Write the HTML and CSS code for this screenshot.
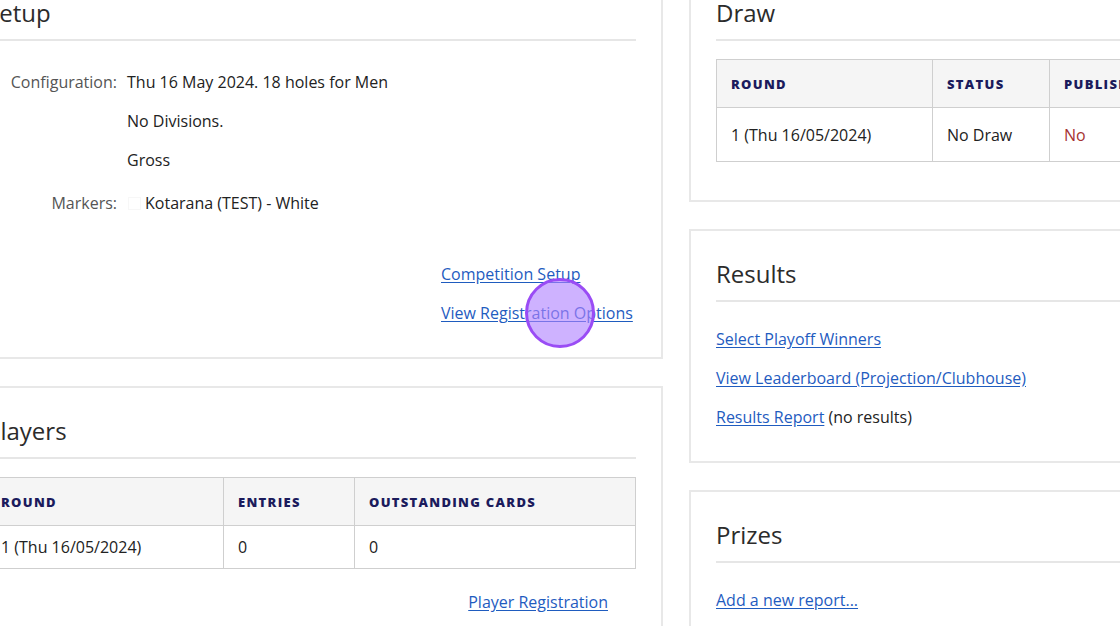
FILE: index.html
```html
<!DOCTYPE html>
<html lang="en">
<head>
    <meta charset="UTF-8">
    <meta name="viewport" content="width=device-width, initial-scale=1.0">
    <title>Competition Overview</title>
    <link rel="stylesheet" href="styles.css">
</head>
<body>
    <div class="page">
        <div class="column">
            <!-- Setup -->
            <section class="card">
                <h2 class="card-title">Setup</h2>
                <div class="details">
                    <div class="label">Configuration:</div>
                    <div class="value">Thu 16 May 2024. 18 holes for Men</div>
                    <div class="label"></div>
                    <div class="value">No Divisions.</div>
                    <div class="label"></div>
                    <div class="value">Gross</div>
                    <div class="label markers">Markers:</div>
                    <div class="value markers"><span class="swatch"></span>Kotarana (TEST) - White</div>
                </div>
                <div class="link-list">
                    <a href="#">Competition Setup</a>
                    <a href="#">View Registration Options</a>
                </div>
            </section>

            <!-- Players -->
            <section class="card">
                <h2 class="card-title">Players</h2>
                <table class="grid players">
                    <thead>
                        <tr>
                            <th class="col-round">Round</th>
                            <th class="col-entries">Entries</th>
                            <th>Outstanding Cards</th>
                        </tr>
                    </thead>
                    <tbody>
                        <tr>
                            <td>1 (Thu 16/05/2024)</td>
                            <td>0</td>
                            <td>0</td>
                        </tr>
                    </tbody>
                </table>
                <div class="card-footer">
                    <a href="#">Player Registration</a>
                </div>
            </section>
        </div>

        <div class="column">
            <!-- Draw -->
            <section class="card">
                <h2 class="card-title">Draw</h2>
                <table class="grid draw">
                    <thead>
                        <tr>
                            <th class="col-round">Round</th>
                            <th class="col-status">Status</th>
                            <th>Published</th>
                        </tr>
                    </thead>
                    <tbody>
                        <tr>
                            <td>1 (Thu 16/05/2024)</td>
                            <td>No Draw</td>
                            <td class="no">No</td>
                        </tr>
                    </tbody>
                </table>
            </section>

            <!-- Results -->
            <section class="card">
                <h2 class="card-title">Results</h2>
                <p><a href="#">Select Playoff Winners</a></p>
                <p><a href="#">View Leaderboard (Projection/Clubhouse)</a></p>
                <p><a href="#">Results Report</a> (no results)</p>
            </section>

            <!-- Prizes -->
            <section class="card">
                <h2 class="card-title">Prizes</h2>
                <p><a href="#">Add a new report...</a></p>
            </section>
        </div>
    </div>

    <div class="click-marker"></div>
</body>
</html>
```

FILE: styles.css
```css
html, body {
    margin: 0;
    height: 100%;
    overflow: hidden;
}

body {
    background-color: #fff;
    font-family: "Open Sans", "Noto Sans", sans-serif;
    font-size: 16px;
    line-height: 24px;
    color: #222;
    position: relative;
}

a {
    color: #1f5cbf;
    text-decoration: underline;
    text-underline-offset: 2px;
}

.page {
    display: grid;
    grid-template-columns: 704px 704px;
    column-gap: 26px;
    margin-left: -41px;
    margin-top: -32px;
    width: 1434px;
}

.column {
    display: flex;
    flex-direction: column;
    gap: 27px;
}

.card {
    border: 2px solid #e8e8e8;
    padding: 28px 25px 32px;
    background: #fff;
}

.card-title {
    margin: 0;
    font-size: 24px;
    line-height: 29px;
    font-weight: 400;
    color: #2b2b2b;
    padding-bottom: 12px;
    border-bottom: 2px solid #e6e6e6;
}

.card p {
    margin: 0 0 15px;
}

.card p:last-child {
    margin-bottom: 0;
}

.card-title + p {
    margin-top: 25px;
}

/* Setup details */
.details {
    display: grid;
    grid-template-columns: 131px 1fr;
    column-gap: 10px;
    row-gap: 15px;
    margin-top: 29px;
}

.label {
    text-align: right;
    color: #555;
}

.details .markers {
    margin-top: 4px;
}

.swatch {
    display: inline-block;
    width: 11px;
    height: 11px;
    margin: 0 4px 0 1px;
    border: 1px solid #f7f7f7;
    background: #fff;
    vertical-align: -1px;
}

.link-list {
    display: flex;
    flex-direction: column;
    align-items: flex-start;
    gap: 15px;
    margin: 47px 0 0 auto;
    width: 195px;
}

/* Tables */
.grid {
    width: 100%;
    border-collapse: collapse;
    margin-top: 18px;
    table-layout: fixed;
}

.grid th,
.grid td {
    border: 1px solid #cfcfcf;
    padding: 0 14px;
    text-align: left;
}

.grid th {
    background: #f5f5f5;
    color: #1b1b5c;
    font-size: 13px;
    font-weight: 800;
    letter-spacing: 1.3px;
    text-transform: uppercase;
    height: 47px;
}

.grid td {
    height: 42px;
}

.players .col-round { width: 208px; }
.players .col-entries { width: 102px; }

.draw { margin-bottom: 6px; }
.draw td { height: 53px; }
.draw .col-round { width: 187px; }
.draw .col-status { width: 88px; }

.no {
    color: #a63232;
}

.card-footer {
    margin-top: 21px;
    padding-right: 28px;
    text-align: right;
}

/* Click indicator overlay */
.click-marker {
    position: absolute;
    left: 525px;
    top: 278px;
    width: 64px;
    height: 64px;
    border: 3px solid #9a4cf5;
    border-radius: 50%;
    background: rgba(176, 130, 255, 0.62);
}
```
